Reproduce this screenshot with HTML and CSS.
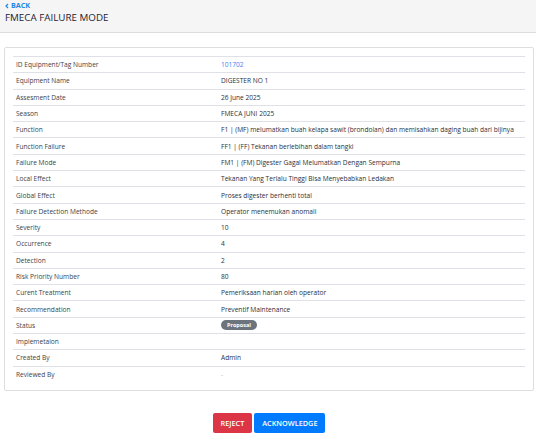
FILE: index.html
```html
<!DOCTYPE html>
<html>
<head>
<meta charset="utf-8">
<link rel="stylesheet" href="styles.css">
</head>
<body>
<header class="topbar">
  <a class="back" href="#"><svg class="chev" viewBox="0 0 6 8" width="4" height="6"><polyline points="4.5,1 1.5,4 4.5,7" fill="none" stroke="currentColor" stroke-width="1.8"/></svg><span>BACK</span></a>
  <h1 class="title">FMECA FAILURE MODE</h1>
</header>
<main class="content">
  <section class="card">
    <table class="detail">
      <tr><td class="lbl">ID Equipment/Tag Number</td><td class="val link">101702</td></tr>
      <tr><td class="lbl">Equipment Name</td><td class="val">DIGESTER NO 1</td></tr>
      <tr><td class="lbl">Assesment Date</td><td class="val">26 June 2025</td></tr>
      <tr><td class="lbl">Season</td><td class="val">FMECA JUNI 2025</td></tr>
      <tr><td class="lbl">Function</td><td class="val">F1 | (MF) melumatkan buah kelapa sawit (brondolan) dan memisahkan daging buah dari bijinya</td></tr>
      <tr><td class="lbl">Function Failure</td><td class="val">FF1 | (FF) Tekanan berlebihan dalam tangki</td></tr>
      <tr><td class="lbl">Failure Mode</td><td class="val">FM1 | (FM) Digester Gagal Melumatkan Dengan Sempurna</td></tr>
      <tr><td class="lbl">Local Effect</td><td class="val">Tekanan Yang Terlalu Tinggi Bisa Menyebabkan Ledakan</td></tr>
      <tr><td class="lbl">Global Effect</td><td class="val">Proses digester berhenti total</td></tr>
      <tr><td class="lbl">Failure Detection Methode</td><td class="val">Operator menemukan anomali</td></tr>
      <tr><td class="lbl">Severity</td><td class="val">10</td></tr>
      <tr><td class="lbl">Occurrence</td><td class="val">4</td></tr>
      <tr><td class="lbl">Detection</td><td class="val">2</td></tr>
      <tr><td class="lbl">Risk Priority Number</td><td class="val">80</td></tr>
      <tr><td class="lbl">Curent Treatment</td><td class="val">Pemeriksaan harian oleh operator</td></tr>
      <tr><td class="lbl">Recommendation</td><td class="val">Preventif Maintenance</td></tr>
      <tr><td class="lbl">Status</td><td class="val"><span class="badge">Proposal</span></td></tr>
      <tr><td class="lbl">Implemetaion</td><td class="val"></td></tr>
      <tr><td class="lbl">Created By</td><td class="val">Admin</td></tr>
      <tr><td class="lbl">Reviewed By</td><td class="val muted">-</td></tr>
    </table>
  </section>
  <div class="actions">
    <button class="btn btn-red">REJECT</button>
    <button class="btn btn-blue">ACKNOWLEDGE</button>
  </div>
</main>
</body>
</html>
```
FILE: styles.css
```css
* { box-sizing: border-box; }
html, body { margin: 0; padding: 0; background: #fff; }
body {
  font-family: "Open Sans", "Noto Sans", sans-serif;
  color: #3b3f4a;
  width: 536px;
  height: 435px;
  overflow: hidden;
}
.topbar {
  background: #f5f5f5;
  border-bottom: 1px solid #dcdcdc;
  height: 33px;
  padding: 1px 5px 0;
}
.back {
  display: flex;
  align-items: center;
  gap: 2px;
  height: 9px;
  color: #1e88e5;
  font-size: 7.2px;
  font-weight: 700;
  text-decoration: none;
  line-height: 9px;
}
.chev { display: block; }
.title {
  margin: 1px 0 0;
  font-size: 9.8px;
  font-weight: 500;
  color: #1f2330;
  line-height: 13px;
}
.content {
  padding: 14px 2px 0 4px;
}
.card {
  border: 1px solid #dedede;
  border-radius: 2px;
  padding: 8px;
  height: 344px;
}
.detail {
  width: 100%;
  border-collapse: collapse;
  font-size: 6.6px;
}
.detail td {
  border-top: 1px solid #dfe1e6;
  height: 16.3px;
  padding: 0 3px;
  vertical-align: middle;
  white-space: nowrap;
}
.lbl { width: 205px; color: #3b3f4a; }
.val { color: #2b2f3a; }
.link { color: #3b82f6; }
.muted { color: #bbb; }
.badge {
  display: inline-block;
  background: #6c757d;
  color: #fff;
  font-size: 5.5px;
  font-weight: 700;
  border-radius: 6px;
  padding: 1px 6px;
  line-height: 8px;
}
.actions {
  display: flex;
  justify-content: center;
  gap: 2px;
  margin-top: 22px;
}
.btn {
  border: 0;
  border-radius: 2px;
  color: #fff;
  font-family: inherit;
  font-size: 7.3px;
  font-weight: 600;
  height: 20px;
  padding: 0 8px;
}
.btn-red { background: #dc3545; }
.btn-blue { background: #007bff; }
```
